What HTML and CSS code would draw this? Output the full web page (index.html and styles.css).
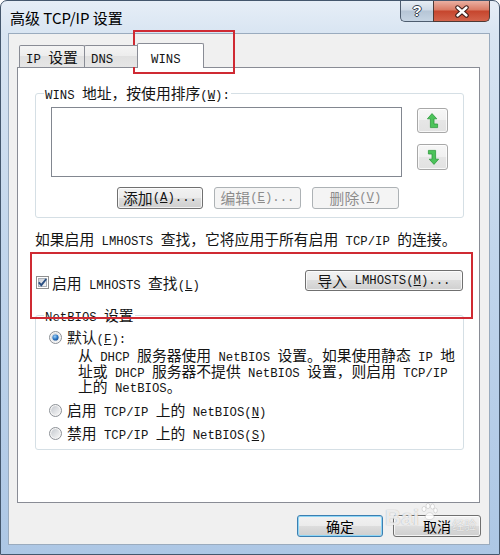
FILE: index.html
```html
<!DOCTYPE html>
<html lang="zh-CN">
<head>
<meta charset="utf-8">
<title>高级 TCP/IP 设置</title>
<link rel="stylesheet" href="styles.css">
</head>
<body>
<div class="window">
  <div class="titlebar">
    <span class="title">高级 TCP/IP 设置</span>
    <div class="caption">
      <div class="cap help">?</div>
      <div class="cap close">
        <svg width="16" height="13" viewBox="0 0 16 13">
          <path d="M3.5 2.5 L12.5 10.5 M12.5 2.5 L3.5 10.5" stroke="#3a1a16" stroke-width="4.4" stroke-linecap="round" fill="none"/>
          <path d="M3.5 2.5 L12.5 10.5 M12.5 2.5 L3.5 10.5" stroke="#ffffff" stroke-width="2.4" stroke-linecap="round" fill="none"/>
        </svg>
      </div>
    </div>
  </div>
  <div class="client">
    <div class="tabs">
      <div class="tab tab-ip"><span class="m">IP </span>设置</div>
      <div class="tab tab-dns"><span class="m">DNS</span></div>
      <div class="tab tab-wins"><span class="m">WINS</span></div>
    </div>
    <div class="panel">
      <fieldset class="group group-wins">
        <legend><span class="m">WINS </span>地址，按使用排序<span class="m">(<u>W</u>):</span></legend>
        <div class="wins-body">
          <div class="list-row">
            <div class="listbox"></div>
            <div class="arrows">
              <div class="btn arrow-btn">
                <svg width="12" height="16" viewBox="0 0 12 16"><path d="M5 0.6 L9.8 5.8 L7 5.8 L7 11 L10.6 11 L10.6 14.6 L3.4 14.6 L3.4 5.8 L0.4 5.8 Z" fill="#4cc35a" stroke="#2e9a3d" stroke-width="0.8"/></svg>
              </div>
              <div class="btn arrow-btn arrow-down">
                <svg width="12" height="16" viewBox="0 0 12 16"><path d="M5 0.6 L9.8 5.8 L7 5.8 L7 11 L10.6 11 L10.6 14.6 L3.4 14.6 L3.4 5.8 L0.4 5.8 Z" fill="#4cc35a" stroke="#2e9a3d" stroke-width="0.8" transform="rotate(180 6 8)"/></svg>
              </div>
            </div>
          </div>
          <div class="btn-row">
            <div class="btn btn-add">添加<span class="m">(<u>A</u>)...</span></div>
            <div class="btn btn-mid disabled">编辑<span class="m">(<u>E</u>)...</span></div>
            <div class="btn btn-mid disabled">删除<span class="m">(<u>V</u>)</span></div>
          </div>
        </div>
      </fieldset>
      <p class="note">如果启用<span class="m"> LMHOSTS </span>查找，它将应用于所有启用<span class="m"> TCP/IP </span>的连接。</p>
      <div class="check-row">
        <svg class="checkbox" width="13" height="13" viewBox="0 0 13 13">
          <defs><linearGradient id="cbg" x1="0" y1="0" x2="1" y2="1"><stop offset="0" stop-color="#c9ced6"/><stop offset="1" stop-color="#f8f8f8"/></linearGradient></defs>
          <rect x="0.5" y="0.5" width="12" height="12" fill="#ffffff" stroke="#8f8f8f"/>
          <rect x="2.5" y="2.5" width="8" height="8" fill="url(#cbg)" stroke="#aab0b8"/>
          <path d="M2.8 6.4 L5.3 9.2 L10.2 3" fill="none" stroke="#2a4f82" stroke-width="1.9"/>
        </svg>
        <span class="check-label">启用<span class="m"> LMHOSTS </span>查找<span class="m">(<u>L</u>)</span></span>
        <div class="btn btn-import">导入<span class="m"> LMHOSTS(<u>M</u>)...</span></div>
      </div>
      <fieldset class="group group-netbios">
        <legend><span class="m">NetBIOS </span>设置</legend>
        <div class="nb-body">
          <div class="radio-row">
            <svg width="13" height="13" viewBox="0 0 13 13">
              <defs>
                <linearGradient id="rin1" x1="0" y1="0" x2="1" y2="1"><stop offset="0" stop-color="#cfd3d8"/><stop offset="1" stop-color="#fafafa"/></linearGradient>
                <radialGradient id="rdot" cx="0.4" cy="0.35" r="0.7"><stop offset="0" stop-color="#9fd0f5"/><stop offset="0.6" stop-color="#2b77c6"/><stop offset="1" stop-color="#1a4d8c"/></radialGradient>
              </defs>
              <circle cx="6.5" cy="6.5" r="6" fill="#f4f4f4" stroke="#8c9096"/>
              <circle cx="6.5" cy="6.5" r="4.4" fill="url(#rin1)"/>
              <circle cx="6.5" cy="6.5" r="3.1" fill="url(#rdot)"/>
            </svg>
            <span class="radio-label">默认<span class="m">(<u>F</u>):</span></span>
          </div>
          <div class="desc">从<span class="m"> DHCP </span>服务器使用<span class="m"> NetBIOS </span>设置。如果使用静态<span class="m"> IP </span>地<br>址或<span class="m"> DHCP </span>服务器不提供<span class="m"> NetBIOS </span>设置，则启用<span class="m"> TCP/IP</span><br>上的<span class="m"> NetBIOS</span>。</div>
          <div class="radio-row radio-2">
            <svg width="13" height="13" viewBox="0 0 13 13">
              <defs><linearGradient id="rin2" x1="0" y1="0" x2="1" y2="1"><stop offset="0" stop-color="#c6cad0"/><stop offset="1" stop-color="#f6f6f6"/></linearGradient></defs>
              <circle cx="6.5" cy="6.5" r="6" fill="#f4f4f4" stroke="#8c9096"/>
              <circle cx="6.5" cy="6.5" r="4.4" fill="url(#rin2)"/>
            </svg>
            <span class="radio-label">启用<span class="m"> TCP/IP </span>上的<span class="m"> NetBIOS(<u>N</u>)</span></span>
          </div>
          <div class="radio-row radio-3">
            <svg width="13" height="13" viewBox="0 0 13 13">
              <defs><linearGradient id="rin3" x1="0" y1="0" x2="1" y2="1"><stop offset="0" stop-color="#c6cad0"/><stop offset="1" stop-color="#f6f6f6"/></linearGradient></defs>
              <circle cx="6.5" cy="6.5" r="6" fill="#f4f4f4" stroke="#8c9096"/>
              <circle cx="6.5" cy="6.5" r="4.4" fill="url(#rin3)"/>
            </svg>
            <span class="radio-label">禁用<span class="m"> TCP/IP </span>上的<span class="m"> NetBIOS(<u>S</u>)</span></span>
          </div>
        </div>
      </fieldset>
    </div>
    <div class="footer">
      <div class="btn btn-ok">确定</div>
      <div class="btn btn-cancel">取消</div>
    </div>
  </div>
  <div class="mark mark-1"></div>
  <div class="mark mark-2"></div>
  <div class="watermark">
    <span class="wm-bai">Bai</span>
    <svg class="wm-paw" width="18" height="18" viewBox="0 0 18 18">
      <g fill="rgba(255,255,255,0.85)" stroke="rgba(150,150,150,0.5)" stroke-width="0.6">
        <ellipse cx="4" cy="6" rx="2" ry="2.6"/>
        <ellipse cx="8" cy="3" rx="2" ry="2.6"/>
        <ellipse cx="12.5" cy="3.5" rx="2" ry="2.6"/>
        <ellipse cx="15.5" cy="7.5" rx="1.8" ry="2.4"/>
        <path d="M5 14 C6 9 12 8 14 13 C15 17 6 18 5 14 Z"/>
      </g>
    </svg>
    <span class="wm-jy">经验</span>
  </div>
</div>
</body>
</html>
```
FILE: styles.css
```css
* { box-sizing: border-box; }
html, body { margin: 0; padding: 0; width: 500px; height: 555px; overflow: hidden; background: #ffffff; }
body {
  font-family: "Noto Sans CJK SC", "Noto Sans", sans-serif;
  font-size: 14.8px;
  line-height: 16px;
  color: #141414;
}
.m {
  font-family: "Liberation Mono", "DejaVu Sans Mono", monospace;
  font-size: 12.3px;
  line-height: 0;
  white-space: pre;
}
u { text-decoration: underline; text-underline-offset: 1px; }

.window {
  position: relative;
  width: 500px;
  height: 555px;
  display: flex;
  flex-direction: column;
  border: 1px solid #44576d;
  border-radius: 7px 7px 0 0;
  padding: 0 9px 9px 7px;
  background: linear-gradient(180deg, #e6eef7 0, #d9e5f2 32px, #c2d6ec 45%, #adc7e5 100%);
}

.titlebar {
  height: 32px;
  display: flex;
  align-items: center;
  padding-left: 2px;
}
.title {
  font-family: "Noto Sans CJK SC", sans-serif;
  font-size: 15px;
  line-height: 20px;
  color: #000;
  margin-top: 1px;
}
.caption {
  margin-left: auto;
  align-self: flex-start;
  display: flex;
}
.cap {
  height: 21px;
  display: flex;
  align-items: center;
  justify-content: center;
}
.help {
  width: 33px;
  border: 1px solid #4e5d6f;
  border-top: 0;
  border-right: 0;
  border-radius: 0 0 0 5px;
  background: linear-gradient(180deg, #e6edf4 0, #cfdae6 45%, #b6c5d6 50%, #c6d4e3 100%);
  color: #ffffff;
  font-family: "Liberation Sans", sans-serif;
  font-weight: bold;
  font-size: 15px;
  line-height: 16px;
  text-shadow: -1px 0 #34414f, 1px 0 #34414f, 0 -1px #34414f, 0 1px #34414f;
}
.close {
  width: 57px;
  border: 1px solid #4e3a36;
  border-top: 0;
  border-radius: 0 0 5px 0;
  background: linear-gradient(180deg, #eab0a2 0, #d97a64 45%, #c6452d 50%, #d3634b 100%);
}

.client {
  flex: 1;
  display: flex;
  flex-direction: column;
  background: #f0f0f0;
  border: 1px solid #9aabbe;
  padding: 9px 9px 0 8px;
}

.tabs {
  display: flex;
  height: 25px;
  margin-bottom: -1px;
  padding-left: 2px;
  position: relative;
  z-index: 1;
}
.tab {
  height: 22px;
  margin-top: 2px;
  border: 1px solid #898c95;
  border-bottom: 0;
  border-radius: 2px 2px 0 0;
  background: linear-gradient(180deg, #f4f4f4 0, #ececec 50%, #e0e0e0 50%, #e6e6e6 100%);
  padding: 3px 0 0 6px;
  line-height: 16px;
  white-space: nowrap;
}
.tab-ip { width: 66px; }
.tab-dns { width: 55px; margin-left: -1px; }
.tab-wins {
  width: 67px;
  height: 25px;
  margin-top: 0;
  margin-left: -2px;
  background: #ffffff;
  padding: 5px 0 0 13px;
}

.panel {
  height: 436px;
  background: #ffffff;
  border: 1px solid #898c95;
  padding: 0 15px 0 17px;
  display: flex;
  flex-direction: column;
}

.group {
  margin: 0;
  min-width: 0;
  border: 1px solid #d5dfe5;
  border-radius: 3px;
  padding: 6px 0 8px 8px;
}
.group legend {
  padding: 0 1px;
  height: 16px;
  line-height: 16px;
  white-space: nowrap;
}
.group-wins { margin-top: 17px; }
.wins-body { margin-left: 7px; }

.list-row { display: flex; }
.listbox {
  width: 351px;
  height: 70px;
  border: 1px solid #828790;
  background: #ffffff;
}
.arrows {
  margin-left: 15px;
  padding-top: 1px;
  display: flex;
  flex-direction: column;
  gap: 11px;
}

.btn {
  display: flex;
  align-items: center;
  justify-content: center;
  height: 22px;
  border: 1px solid #707070;
  border-radius: 3px;
  background: linear-gradient(180deg, #f2f2f2 0, #ebebeb 50%, #dddddd 50%, #cfcfcf 100%);
  box-shadow: inset 0 0 0 1px rgba(255, 255, 255, 0.75);
  color: #141414;
  white-space: nowrap;
  line-height: 16px;
}
.btn.disabled {
  border-color: #adb2b5;
  background: #f4f4f4;
  box-shadow: none;
  color: #8c8c8c;
}
.arrow-btn {
  width: 31px;
  height: 25px;
  border-color: #a8a8a8;
  background: linear-gradient(180deg, #f6f6f6 0, #f0f0f0 50%, #e6e6e6 50%, #e2e2e2 100%);
}
.arrow-down { height: 26px; }

.btn-row {
  display: flex;
  gap: 11px;
  margin-top: 10px;
  margin-left: 66px;
}
.btn-add { width: 86px; }
.btn-mid { width: 87px; }

.note {
  margin: 13px 0 0;
  height: 16px;
  white-space: nowrap;
  line-height: 16px;
}

.check-row {
  display: flex;
  align-items: flex-end;
  height: 21px;
  margin-top: 23px;
}
.checkbox { margin: 0 0 2px 1px; flex: none; }
.check-label { margin-left: 3px; white-space: nowrap; height: 16px; }
.btn-import {
  margin-left: auto;
  margin-right: 1px;
  width: 158px;
  height: 21px;
}

.group-netbios { margin-top: 16px; }
.nb-body { padding-left: 5px; }
.radio-row {
  display: flex;
  align-items: center;
  height: 16px;
}
.radio-row svg { flex: none; }
.radio-label { margin-left: 5px; white-space: nowrap; }
.desc {
  margin: 2px 0 0 29px;
  height: 47px;
  line-height: 15.5px;
  white-space: nowrap;
}
.radio-2 { margin-top: 8px; }
.radio-3 { margin-top: 7px; }

.footer {
  display: flex;
  justify-content: flex-end;
  gap: 10px;
  margin-top: 12px;
  margin-right: -1px;
}
.btn-ok, .btn-cancel {
  height: 22px;
  font-size: 14px;
  color: #000;
}
.btn-ok {
  width: 86px;
  border-color: #3c7fb1;
  box-shadow: inset 0 0 0 1px #8fd6f6;
  background: linear-gradient(180deg, #f2f2f2 0, #ebebeb 50%, #dddddd 50%, #cfcfcf 100%);
}
.btn-cancel { width: 88px; }

.mark {
  position: absolute;
  border: 2px solid #cf2a33;
  pointer-events: none;
}
.mark-1 { left: 132px; top: 29px; width: 102px; height: 44px; }
.mark-2 { left: 29px; top: 251px; width: 443px; height: 67px; }

.watermark {
  position: absolute;
  left: 384px;
  top: 500px;
  display: flex;
  align-items: flex-end;
  pointer-events: none;
}
.wm-bai {
  font-family: "Liberation Sans", sans-serif;
  font-weight: bold;
  font-size: 22px;
  line-height: 34px;
  color: rgba(255, 255, 255, 0.8);
  text-shadow: 0 0 1px rgba(110, 110, 110, 0.6);
}
.wm-paw { margin: 0 0 14px 1px; }
.wm-jy {
  font-size: 12px;
  line-height: 16px;
  margin: 0 0 2px 14px;
  color: rgba(255, 255, 255, 0.8);
  text-shadow: 0 0 1px rgba(110, 110, 110, 0.6);
}
```
